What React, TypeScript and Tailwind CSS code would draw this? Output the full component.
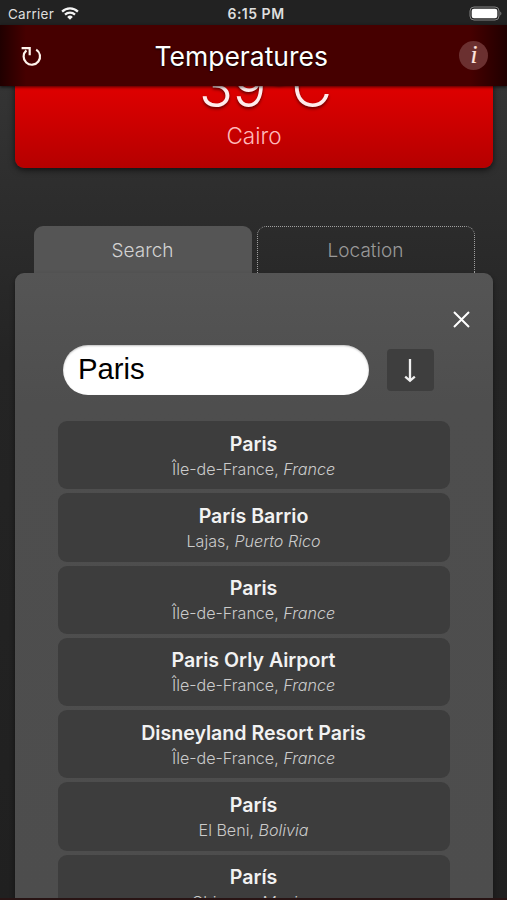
import React from "react";

type Result = { name: string; region: string; country: string };

const results: Result[] = [
  { name: "Paris", region: "Île-de-France", country: "France" },
  { name: "París Barrio", region: "Lajas", country: "Puerto Rico" },
  { name: "Paris", region: "Île-de-France", country: "France" },
  { name: "Paris Orly Airport", region: "Île-de-France", country: "France" },
  { name: "Disneyland Resort Paris", region: "Île-de-France", country: "France" },
  { name: "París", region: "El Beni", country: "Bolivia" },
  { name: "París", region: "Chiapas", country: "Mexico" },
];

function StatusBar() {
  return (
    <div className="grid h-[25px] shrink-0 grid-cols-3 items-center bg-[#222222] pt-[3px] text-[13.5px] leading-none text-[#dedede]">
      <div className="flex items-center gap-[7px] pl-[8px]">
        <span className="pt-px tracking-[0.25px]">Carrier</span>
        <svg width="18" height="13" viewBox="0 0 18 13" className="-mt-[2px]" fill="none" stroke="#f4f4f4" strokeWidth="2.2">
          <path d="M1.1 4.6a11.2 11.2 0 0 1 15.8 0" />
          <path d="M4 7.6a7.1 7.1 0 0 1 10 0" />
          <path d="M9 12.7 6.2 9.9a4 4 0 0 1 5.6 0Z" fill="#f4f4f4" stroke="none" />
        </svg>
      </div>
      <span className="pl-[5px] text-center text-[14px] font-semibold tracking-[0.5px]">6:15 PM</span>
      <div className="flex justify-end pr-[5px]">
        <svg width="33" height="15" viewBox="0 0 33 15" className="-mt-[2px]">
          <rect x="1" y="1" width="29" height="13" rx="4" fill="none" stroke="#858585" />
          <rect x="2.7" y="2.7" width="25.6" height="9.6" rx="2.3" fill="#fff" />
          <path d="M31.3 5.4c1.4.7 1.4 3.5 0 4.2Z" fill="#858585" />
        </svg>
      </div>
    </div>
  );
}

function Header() {
  return (
    <header className="z-10 flex h-[61px] shrink-0 items-center justify-between bg-[linear-gradient(90deg,#200000_0,#460000_26px,#460000_470px,#200000_507px)] pr-[18.5px] pl-[20px] text-white shadow-[0_1px_3px_rgba(0,0,0,0.7)]">
      <svg width="24" height="24" viewBox="0 0 24 24" fill="none" stroke="#fff4ec" strokeWidth="2.2" className="mt-[1px]">
        <path d="M1.6 4.2h8.1v7" />
        <path d="M6.4 6.4A8.2 8.2 0 1 0 16.200 5.600" />
      </svg>
      <h1 className="-ml-[21px] pt-[2px] text-[26.5px] leading-none [text-shadow:0_1px_2px_#000]">Temperatures</h1>
      <div className="mb-[1px] flex size-[29px] items-center justify-center rounded-full bg-[#6b3030] pb-[2px] font-['Liberation_Serif',serif] text-[25px] leading-none text-[#ffe4df] italic [-webkit-text-stroke:0.2px_#ffe4df]">i</div>
    </header>
  );
}

function ResultRow({ item }: { item: Result }) {
  return (
    <li className="flex h-[68.3px] shrink-0 flex-col items-center rounded-[9px] bg-[#3d3d3d] pt-[10.6px] whitespace-nowrap">
      <span className="text-[19.6px] leading-[25px] font-semibold text-[#f2f2f2]">{item.name}</span>
      <span className="text-[16.1px] leading-[25px] font-light text-[#cbcbcb]">
        {item.region}, <i>{item.country}</i>
      </span>
    </li>
  );
}

export default function App() {
  return (
    <div className="flex h-[900px] w-[507px] flex-col overflow-hidden bg-[linear-gradient(#343434_86px,#2d2d2d_200px,#242424_360px,#202020_900px)] font-['Inter','Liberation_Sans',sans-serif]">
      <StatusBar />
      <Header />
      <main className="flex min-h-0 flex-1 flex-col overflow-hidden px-[14.5px]">
        <section className="-mt-[32px] flex h-[113.5px] shrink-0 flex-col items-center rounded-b-[9px] bg-[linear-gradient(#df0000_32px,#b50000)] text-white shadow-[0_2px_6px_rgba(0,0,0,0.65)]">
          <div className="pl-[24px] text-[56px] leading-[66px] font-light text-[#ffecec] [text-shadow:0_2px_3px_rgba(0,0,0,0.5)]">39°C</div>
          <div className="mt-[2px] pl-px text-[22.5px] leading-[28px] font-light text-[#ffb9b9]">Cairo</div>
        </section>

        <div className="mt-[58.5px] flex h-[47px] shrink-0 gap-[5px] pl-[19px] text-[19px] leading-[49px] font-light">
          <div className="w-[218px] rounded-t-[9px] bg-[#555555] text-center text-[#d2d2d2]">Search</div>
          <div className="w-[218px] rounded-t-[9px] border border-b-0 border-dotted border-[#a0a0a0] text-center leading-[47px] text-[#999999]">Location</div>
        </div>

        <section className="flex min-h-0 flex-1 flex-col rounded-t-[9px] bg-[linear-gradient(#555,#4e4e4e_130px,#4d4d4d)] px-[43px] shadow-[0_3px_5px_rgba(0,0,0,0.45)]">
          <button className="mt-[38px] -mr-[20px] self-end">
            <svg width="17" height="17" viewBox="0 0 17 17" stroke="#fff" strokeWidth="2" fill="none">
              <path d="m1 1 15 15M16 1 1 16" />
            </svg>
          </button>
          <div className="mt-[17px] flex shrink-0 items-center gap-[18px] pl-[5.5px]">
            <div className="h-[50px] w-[306px] rounded-full bg-white pl-[15px] font-['Liberation_Sans',Arial,sans-serif] text-[29.3px] leading-[48px] text-black shadow-[inset_0_1px_2px_rgba(0,0,0,0.25)]">Paris</div>
            <button className="flex h-[42px] w-[47px] items-center justify-center rounded-[4px] bg-[#3e3e3e] pt-[2px] pr-px">
              <svg width="14" height="24" viewBox="0 0 14 24" fill="none" stroke="#f0f0f0" strokeWidth="2.3">
                <path d="M7 0v21.5M2.2 17.6l4.8 4.2 4.8-4.2" />
              </svg>
            </button>
          </div>
          <ul className="mt-[26px] flex flex-col gap-[4px]">
            {results.map((item, index) => <ResultRow key={index} item={item} />)}
          </ul>
        </section>
      </main>
      <div className="z-10 -mt-[2px] h-[2px] shrink-0 bg-[#281414]" />
    </div>
  );
}
